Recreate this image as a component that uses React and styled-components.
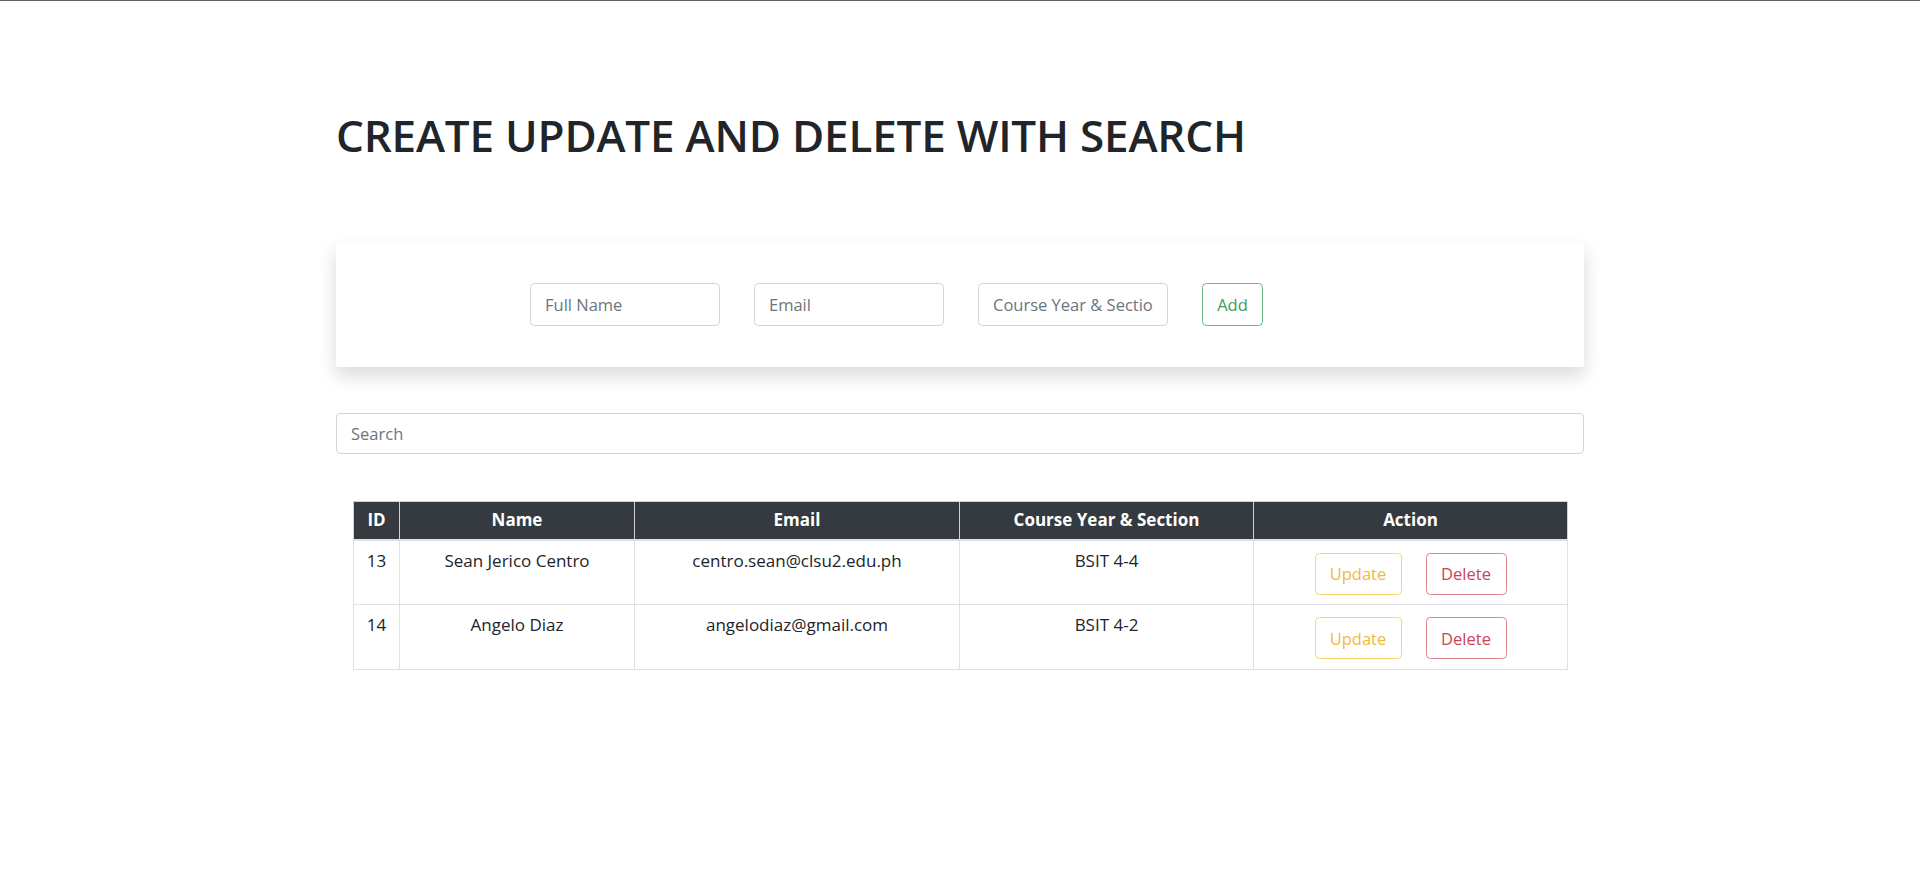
import React from 'react';
import styled, { createGlobalStyle } from 'styled-components';

const GlobalStyle = createGlobalStyle`
  * { box-sizing: border-box; }
  html, body { margin: 0; padding: 0; background: #fff; }
  body {
    font-family: "Open Sans", "Noto Sans", sans-serif;
    color: #212529;
    border-top: 1px solid #5f5f5f;
  }
`;

const Container = styled.div`
  width: 1248px;
  margin: 0 auto;
  padding-top: 108px;
  padding-bottom: 60px;
`;

const Title = styled.h1`
  margin: 0;
  font-size: 44px;
  line-height: 1.2;
  font-weight: 600;
  letter-spacing: -0.2px;
  color: #212529;
`;

const Card = styled.div`
  margin-top: 81px;
  background: #fff;
  box-shadow: 0 9px 18px rgba(0, 0, 0, 0.15);
  padding: 40px 0 41px 194px;
  display: flex;
  align-items: center;
  gap: 34px;
`;

const Input = styled.input`
  display: block;
  width: ${(p) => p.$w || '190px'};
  height: ${(p) => p.$h || '43px'};
  padding: 0 14px;
  font-family: inherit;
  font-size: 16.5px;
  color: #495057;
  background: #fff;
  border: 1px solid #ced4da;
  border-radius: 4.4px;
  outline: none;
  &::placeholder { color: #6c757d; opacity: 1; }
`;

const SearchInput = styled(Input)`
  margin-top: 46px;
`;

const OutlineButton = styled.button`
  display: inline-flex;
  align-items: center;
  justify-content: center;
  width: ${(p) => p.$w};
  height: ${(p) => p.$h || '43px'};
  padding: 0;
  font-family: inherit;
  font-size: 16.5px;
  color: ${(p) => p.$color};
  background: transparent;
  border: 1px solid ${(p) => p.$border};
  border-radius: 4.4px;
  cursor: pointer;
`;

const TableWrap = styled.div`
  margin-top: 47px;
  padding: 0 16px 0 17px;
`;

const Table = styled.table`
  width: 100%;
  border-collapse: collapse;
  table-layout: fixed;
  border: 1px solid #dee2e6;
`;

const Th = styled.th`
  background: #343a40;
  color: #fff;
  font-weight: 700;
  font-size: 17px;
  line-height: 24px;
  padding: 6px 4px 7px;
  text-align: center;
  border: 1px solid #d0d3d6;
  border-bottom: 2px solid #dee2e6;
`;

const Td = styled.td`
  font-size: 17px;
  line-height: 24px;
  padding: 8px 4px;
  height: 65px;
  text-align: center;
  vertical-align: top;
  border: 1px solid #dee2e6;
`;

const Actions = styled.div`
  display: flex;
  justify-content: center;
  gap: 24px;
  margin-top: 4px;
`;

const students = [
  { id: 13, name: 'Sean Jerico Centro', email: 'centro.sean@clsu2.edu.ph', course: 'BSIT 4-4' },
  { id: 14, name: 'Angelo Diaz', email: 'angelodiaz@gmail.com', course: 'BSIT 4-2' },
];

export default function App() {
  return (
    <>
      <GlobalStyle />
      <Container>
        <Title>CREATE UPDATE AND DELETE WITH SEARCH</Title>
        <Card>
          <Input placeholder="Full Name" />
          <Input placeholder="Email" />
          <Input placeholder="Course Year &amp; Section" />
          <OutlineButton $w="61px" $color="#3d9a5c" $border="#6cb788">Add</OutlineButton>
        </Card>
        <SearchInput $w="1248px" $h="41px" placeholder="Search" />
        <TableWrap>
          <Table>
            <colgroup>
              <col style={{ width: '46px' }} />
              <col style={{ width: '235px' }} />
              <col style={{ width: '325px' }} />
              <col style={{ width: '294px' }} />
              <col />
            </colgroup>
            <thead>
              <tr>
                <Th>ID</Th>
                <Th>Name</Th>
                <Th>Email</Th>
                <Th>Course Year &amp; Section</Th>
                <Th>Action</Th>
              </tr>
            </thead>
            <tbody>
              {students.map((s) => (
                <tr key={s.id}>
                  <Td>{s.id}</Td>
                  <Td>{s.name}</Td>
                  <Td>{s.email}</Td>
                  <Td>{s.course}</Td>
                  <Td>
                    <Actions>
                      <OutlineButton $w="87px" $h="42px" $color="#f2b93b" $border="#fbd56a">Update</OutlineButton>
                      <OutlineButton $w="81px" $h="42px" $color="#cc4455" $border="#de8590">Delete</OutlineButton>
                    </Actions>
                  </Td>
                </tr>
              ))}
            </tbody>
          </Table>
        </TableWrap>
      </Container>
    </>
  );
}
